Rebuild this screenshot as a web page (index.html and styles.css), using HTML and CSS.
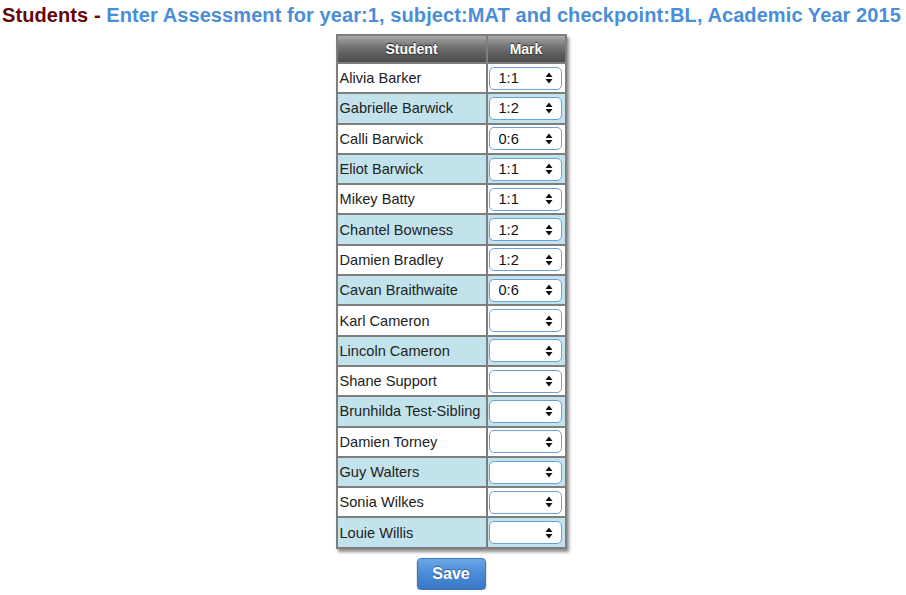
FILE: index.html
```html
<!DOCTYPE html>
<html lang="en">
<head>
<meta charset="utf-8">
<title>Students - Enter Assessment</title>
<link rel="stylesheet" href="styles.css">
</head>
<body>
<h1 class="title"><span class="title-main">Students - </span><span class="title-sub">Enter Assessment for year:1, subject:MAT and checkpoint:BL, Academic Year 2015</span></h1>
<form class="assess-form">
<table class="grid">
<thead>
<tr><th class="col-student">Student</th><th class="col-mark">Mark</th></tr>
</thead>
<tbody>
<tr><td class="name">Alivia Barker</td><td class="mark"><span class="sel"><select><option>1:1</option></select><svg class="arrows" viewBox="0 0 8 12" width="8" height="12"><path d="M4 0.5 L7.5 5 H0.5 Z M4 11.5 L7.5 7 H0.5 Z" fill="#111"/></svg></span></td></tr>
<tr><td class="name">Gabrielle Barwick</td><td class="mark"><span class="sel"><select><option>1:2</option></select><svg class="arrows" viewBox="0 0 8 12" width="8" height="12"><path d="M4 0.5 L7.5 5 H0.5 Z M4 11.5 L7.5 7 H0.5 Z" fill="#111"/></svg></span></td></tr>
<tr><td class="name">Calli Barwick</td><td class="mark"><span class="sel"><select><option>0:6</option></select><svg class="arrows" viewBox="0 0 8 12" width="8" height="12"><path d="M4 0.5 L7.5 5 H0.5 Z M4 11.5 L7.5 7 H0.5 Z" fill="#111"/></svg></span></td></tr>
<tr><td class="name">Eliot Barwick</td><td class="mark"><span class="sel"><select><option>1:1</option></select><svg class="arrows" viewBox="0 0 8 12" width="8" height="12"><path d="M4 0.5 L7.5 5 H0.5 Z M4 11.5 L7.5 7 H0.5 Z" fill="#111"/></svg></span></td></tr>
<tr><td class="name">Mikey Batty</td><td class="mark"><span class="sel"><select><option>1:1</option></select><svg class="arrows" viewBox="0 0 8 12" width="8" height="12"><path d="M4 0.5 L7.5 5 H0.5 Z M4 11.5 L7.5 7 H0.5 Z" fill="#111"/></svg></span></td></tr>
<tr><td class="name">Chantel Bowness</td><td class="mark"><span class="sel"><select><option>1:2</option></select><svg class="arrows" viewBox="0 0 8 12" width="8" height="12"><path d="M4 0.5 L7.5 5 H0.5 Z M4 11.5 L7.5 7 H0.5 Z" fill="#111"/></svg></span></td></tr>
<tr><td class="name">Damien Bradley</td><td class="mark"><span class="sel"><select><option>1:2</option></select><svg class="arrows" viewBox="0 0 8 12" width="8" height="12"><path d="M4 0.5 L7.5 5 H0.5 Z M4 11.5 L7.5 7 H0.5 Z" fill="#111"/></svg></span></td></tr>
<tr><td class="name">Cavan Braithwaite</td><td class="mark"><span class="sel"><select><option>0:6</option></select><svg class="arrows" viewBox="0 0 8 12" width="8" height="12"><path d="M4 0.5 L7.5 5 H0.5 Z M4 11.5 L7.5 7 H0.5 Z" fill="#111"/></svg></span></td></tr>
<tr><td class="name">Karl Cameron</td><td class="mark"><span class="sel"><select><option value=""></option></select><svg class="arrows" viewBox="0 0 8 12" width="8" height="12"><path d="M4 0.5 L7.5 5 H0.5 Z M4 11.5 L7.5 7 H0.5 Z" fill="#111"/></svg></span></td></tr>
<tr><td class="name">Lincoln Cameron</td><td class="mark"><span class="sel"><select><option value=""></option></select><svg class="arrows" viewBox="0 0 8 12" width="8" height="12"><path d="M4 0.5 L7.5 5 H0.5 Z M4 11.5 L7.5 7 H0.5 Z" fill="#111"/></svg></span></td></tr>
<tr><td class="name">Shane Support</td><td class="mark"><span class="sel"><select><option value=""></option></select><svg class="arrows" viewBox="0 0 8 12" width="8" height="12"><path d="M4 0.5 L7.5 5 H0.5 Z M4 11.5 L7.5 7 H0.5 Z" fill="#111"/></svg></span></td></tr>
<tr><td class="name">Brunhilda Test-Sibling</td><td class="mark"><span class="sel"><select><option value=""></option></select><svg class="arrows" viewBox="0 0 8 12" width="8" height="12"><path d="M4 0.5 L7.5 5 H0.5 Z M4 11.5 L7.5 7 H0.5 Z" fill="#111"/></svg></span></td></tr>
<tr><td class="name">Damien Torney</td><td class="mark"><span class="sel"><select><option value=""></option></select><svg class="arrows" viewBox="0 0 8 12" width="8" height="12"><path d="M4 0.5 L7.5 5 H0.5 Z M4 11.5 L7.5 7 H0.5 Z" fill="#111"/></svg></span></td></tr>
<tr><td class="name">Guy Walters</td><td class="mark"><span class="sel"><select><option value=""></option></select><svg class="arrows" viewBox="0 0 8 12" width="8" height="12"><path d="M4 0.5 L7.5 5 H0.5 Z M4 11.5 L7.5 7 H0.5 Z" fill="#111"/></svg></span></td></tr>
<tr><td class="name">Sonia Wilkes</td><td class="mark"><span class="sel"><select><option value=""></option></select><svg class="arrows" viewBox="0 0 8 12" width="8" height="12"><path d="M4 0.5 L7.5 5 H0.5 Z M4 11.5 L7.5 7 H0.5 Z" fill="#111"/></svg></span></td></tr>
<tr><td class="name">Louie Willis</td><td class="mark"><span class="sel"><select><option value=""></option></select><svg class="arrows" viewBox="0 0 8 12" width="8" height="12"><path d="M4 0.5 L7.5 5 H0.5 Z M4 11.5 L7.5 7 H0.5 Z" fill="#111"/></svg></span></td></tr>
</tbody>
</table>
<div class="actions"><button type="button" class="save-btn">Save</button></div>
</form>
</body>
</html>
```
FILE: styles.css
```css
html, body {
  margin: 0;
  padding: 0;
  background: #fff;
}
body {
  font-family: "Liberation Sans", Arial, Helvetica, sans-serif;
  color: #222;
  overflow: hidden;
}
.title {
  margin: 0;
  padding: 3.5px 0 0 2px;
  font-size: 20px;
  line-height: 23px;
  font-weight: bold;
  white-space: nowrap;
  letter-spacing: 0.085px;
}
.title-main {
  color: #650707;
}
.title-sub {
  color: #4a8ed8;
}
.assess-form {
  display: flex;
  flex-direction: column;
  align-items: center;
  padding: 7.5px 4px 0 0;
}
.grid {
  border-collapse: collapse;
  border: 2px solid #7e7e7e;
  box-shadow: 2px 3px 3px rgba(0, 0, 0, 0.45);
  font-size: 14.6px;
}
.grid th {
  border: 2px solid #7e7e7e;
  height: 26px;
  padding: 0;
  background: linear-gradient(#a9a9a9 0%, #7a7a7a 35%, #5c5c5c 70%, #4f4f4f 100%);
  color: #fff;
  font-size: 14px;
  font-weight: bold;
  text-shadow: 0 -1px 1px rgba(0, 0, 0, 0.7), 0 1px 1px rgba(0, 0, 0, 0.4);
  text-align: center;
}
.col-student {
  width: 148px;
}
.col-mark {
  width: 77px;
}
.grid td {
  border: 2px solid #7e7e7e;
  height: 28.3px;
  padding: 0;
}
.grid tbody tr:nth-child(even) td {
  background: #c3e3ec;
}
.grid tbody tr:nth-child(odd) td {
  background: #fff;
}
.name {
  padding-left: 2px !important;
  color: #222;
  white-space: nowrap;
}
.mark {
  padding-left: 1px !important;
}
.sel {
  position: relative;
  display: block;
  width: 73px;
  height: 23px;
}
.sel select {
  appearance: none;
  -webkit-appearance: none;
  width: 73px;
  height: 23px;
  box-sizing: border-box;
  border: 1px solid #6d9fdb;
  border-radius: 5px;
  background: #fff;
  font-family: "Liberation Sans", Arial, Helvetica, sans-serif;
  font-size: 14.6px;
  color: #111;
  padding: 0 0 0 9px;
  margin: 0;
  display: block;
}
.arrows {
  position: absolute;
  right: 9px;
  top: 5.5px;
  pointer-events: none;
}
.actions {
  display: flex;
  justify-content: center;
  padding-top: 9px;
}
.save-btn {
  width: 69px;
  height: 32px;
  border: 1px solid #3c77bd;
  border-radius: 4px;
  background: linear-gradient(#6aa8e6, #4a8ad6 50%, #3a78c4);
  color: #fff;
  font-family: "Liberation Sans", Arial, Helvetica, sans-serif;
  font-size: 16px;
  font-weight: bold;
  text-shadow: 0 -1px 1px rgba(0, 0, 0, 0.35);
  box-shadow: 0 1px 2px rgba(0, 0, 0, 0.35);
  padding: 0;
  cursor: pointer;
}
```
